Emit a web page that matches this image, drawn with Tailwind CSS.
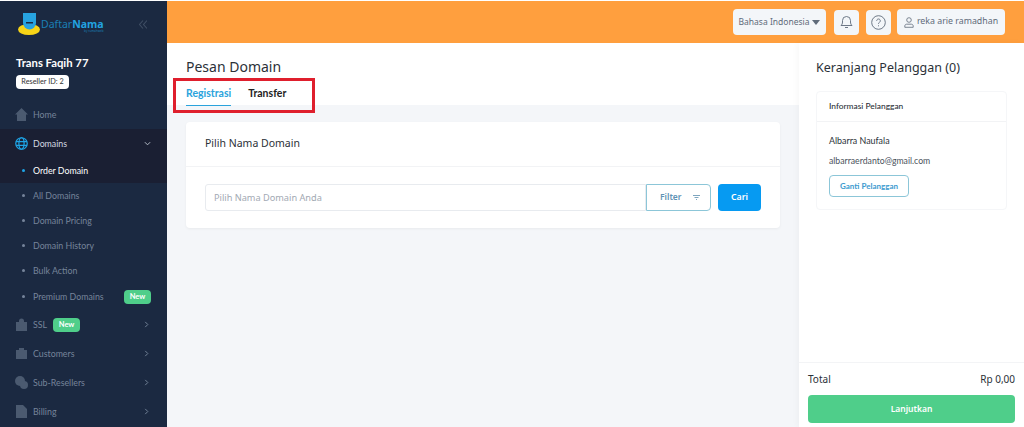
<!DOCTYPE html>
<html lang="id">
<head>
  <meta charset="UTF-8" />
  <title>Pesan Domain</title>
  <script src="https://cdn.jsdelivr.net/npm/@tailwindcss/browser@4"></script>
</head>
<body class="bg-white font-['Noto_Sans',sans-serif]">
  <div class="relative flex h-[427px] w-[1024px] overflow-hidden pt-px">
    <!-- Sidebar -->
    <aside class="flex h-full w-[167px] shrink-0 flex-col bg-[#1b2941] font-['Lato',sans-serif]">
      <div class="flex h-[47px] items-center pl-[18px] pr-[20px]">
        <svg class="mb-[2px] h-[22px] w-[22px]" viewBox="0 0 22 22">
          <ellipse cx="11" cy="16.500" rx="11" ry="5.500" fill="#f7d417" />
          <path d="M5 0h13v10a6.500 6.500 0 0 1-13 0z" fill="#27a3e0" />
          <rect x="8" y="9" width="7" height="1.500" fill="#1b2941" />
        </svg>
        <div class="relative ml-[1px] font-['Noto_Sans',sans-serif] text-[10.500px] leading-none text-[#1a7fb4]">Daftar<b class="font-bold text-[#22a3e0]">Nama</b>
          <span class="absolute right-0 top-[11px] text-[3px] text-[#1a7fb4]">by rumahweb</span>
        </div>
        <svg class="ml-auto h-[9px] w-[8px]" viewBox="0 0 8 9" fill="none" stroke="#3f4e64" stroke-width="1.100"><path d="M4 .5 .5 4.500 4 8.500M8 .5 4.500 4.500 8 8.500" /></svg>
      </div>
      <div class="pl-[16px] pt-[7px]">
        <div class="text-[11.300px] leading-[16px] font-bold text-white">Trans Faqih 77</div>
        <div class="mt-[4px] flex h-[14px] w-[53px] items-center justify-center rounded-[4px] bg-white text-[7.300px] text-[#333]">Reseller ID: 2</div>
      </div>
      <nav class="mt-[11px] flex flex-col text-[8.800px] text-[#76849a]">
        <a class="flex h-[29px] items-center pl-[15px]">
          <svg class="mr-[5px] h-[13px] w-[13px]" viewBox="0 0 13 13" fill="#4b5a70"><path d="M6.500 0 13 6.500h-2V13H2V6.500H0z" /></svg>Home
        </a>
        <div class="bg-[#1a1f33]">
          <a class="flex h-[29px] items-center pl-[15px] pr-[16px] text-[#d4d9e2]">
            <svg class="mr-[5px] h-[13px] w-[13px]" viewBox="0 0 14 14" fill="none" stroke="#1ea4e6" stroke-width="1.300"><circle cx="7" cy="7" r="6.200" /><ellipse cx="7" cy="7" rx="2.800" ry="6.200" /><path d="M1 5h12M1 9h12" /></svg>
            Domains
            <svg class="ml-auto h-[7px] w-[7px]" viewBox="0 0 8 8" fill="none" stroke="#b7bfcb" stroke-width="1.100"><path d="m1 2.500 3 3 3-3" /></svg>
          </a>
          <a class="flex h-[25px] items-center pl-[22px] text-white">
            <span class="mr-[8px] h-[3px] w-[3px] rounded-full bg-[#1ea4e6]"></span>Order Domain
          </a>
        </div>
        <a class="flex h-[25px] items-center pl-[22px]"><span class="mr-[8px] h-[3px] w-[3px] rounded-full bg-[#76849a]"></span>All Domains</a>
        <a class="flex h-[25px] items-center pl-[22px]"><span class="mr-[8px] h-[3px] w-[3px] rounded-full bg-[#76849a]"></span>Domain Pricing</a>
        <a class="flex h-[25px] items-center pl-[22px]"><span class="mr-[8px] h-[3px] w-[3px] rounded-full bg-[#76849a]"></span>Domain History</a>
        <a class="flex h-[25px] items-center pl-[22px]"><span class="mr-[8px] h-[3px] w-[3px] rounded-full bg-[#76849a]"></span>Bulk Action</a>
        <a class="flex h-[27px] items-center pl-[22px] pr-[16px]"><span class="mr-[8px] h-[3px] w-[3px] rounded-full bg-[#76849a]"></span>Premium Domains
          <span class="ml-auto flex h-[14px] w-[27px] items-center justify-center rounded-[4px] bg-[#4fce8a] text-[7.500px] font-bold text-white">New</span>
        </a>
        <a class="flex h-[29px] items-center pl-[16px] pr-[17px]">
          <svg class="mr-[6px] h-[13px] w-[11px]" viewBox="0 0 11 13" fill="#4b5a70"><path d="M3 4V3a2.500 2.500 0 0 1 5 0v1h3v9H0V4z" /></svg>SSL
          <span class="ml-[6px] flex h-[14px] w-[27px] items-center justify-center rounded-[4px] bg-[#4fce8a] text-[7.500px] font-bold text-white">New</span>
          <svg class="ml-auto h-[7px] w-[7px]" viewBox="0 0 8 8" fill="none" stroke="#76849a" stroke-width="1.100"><path d="m2.500 1 3 3-3 3" /></svg>
        </a>
        <a class="flex h-[29px] items-center pl-[16px] pr-[17px]">
          <svg class="mr-[6px] h-[11px] w-[11px]" viewBox="0 0 11 11" fill="#4b5a70"><path d="M3 0h5v2h3v9H0V2h3z" /></svg>Customers
          <svg class="ml-auto h-[7px] w-[7px]" viewBox="0 0 8 8" fill="none" stroke="#76849a" stroke-width="1.100"><path d="m2.500 1 3 3-3 3" /></svg>
        </a>
        <a class="flex h-[29px] items-center pl-[15px] pr-[17px]">
          <svg class="mr-[5px] h-[13px] w-[13px]" viewBox="0 0 13 13" fill="#4b5a70"><circle cx="5" cy="5" r="5" /><circle cx="9" cy="9" r="4" /></svg>Sub-Resellers
          <svg class="ml-auto h-[7px] w-[7px]" viewBox="0 0 8 8" fill="none" stroke="#76849a" stroke-width="1.100"><path d="m2.500 1 3 3-3 3" /></svg>
        </a>
        <a class="flex h-[29px] items-center pl-[16px] pr-[17px]">
          <svg class="mr-[6px] h-[13px] w-[11px]" viewBox="0 0 11 13" fill="#4b5a70"><path d="M0 0h7l4 4v9H0z" /></svg>Billing
          <svg class="ml-auto h-[7px] w-[7px]" viewBox="0 0 8 8" fill="none" stroke="#76849a" stroke-width="1.100"><path d="m2.500 1 3 3-3 3" /></svg>
        </a>
      </nav>
    </aside>

    <div class="flex min-w-0 flex-1 flex-col">
      <!-- Top bar -->
      <header class="flex h-[42px] shrink-0 items-center justify-end bg-[#ff9f3e] pr-[19px]">
        <div class="flex h-[26px] w-[93px] items-center justify-center gap-[3px] rounded-[4px] bg-[#f3f6f9] text-[8.500px] text-[#5f6b7a]">
          Bahasa Indonesia
          <svg class="h-[5px] w-[8px]" viewBox="0 0 8 5" fill="#5f6b7a"><path d="M0 0h8L4 5z" /></svg>
        </div>
        <div class="ml-[8px] flex h-[25px] w-[25px] items-center justify-center rounded-[4px] bg-[#f3f6f9]">
          <svg class="h-[14px] w-[13px]" viewBox="0 0 13 14" fill="none" stroke="#5f6b7a" stroke-width="0.900"><path d="M1 10.500h11c-1-1-1.500-2-1.500-3.500V5.500a4 4 0 0 0-8 0V7C2.500 8.500 2 9.500 1 10.500zM5 12.500h3" /></svg>
        </div>
        <div class="ml-[7px] flex h-[25px] w-[25px] items-center justify-center rounded-[4px] bg-[#f3f6f9]">
          <svg class="h-[15px] w-[15px]" viewBox="0 0 15 15" fill="none" stroke="#5f6b7a" stroke-width="0.900"><circle cx="7.500" cy="7.500" r="6.800" /><path d="M5.700 5.800a1.800 1.800 0 1 1 2.800 1.500c-.7.4-1 .8-1 1.500M7.500 10.300v1" /></svg>
        </div>
        <div class="ml-[6px] flex h-[26px] w-[108px] items-center justify-center gap-[3px] rounded-[4px] bg-[#f3f6f9] text-[8.800px] text-[#5f6b7a]">
          <svg class="h-[11px] w-[10px]" viewBox="0 0 10 11" fill="none" stroke="#5f6b7a" stroke-width="0.800"><circle cx="5" cy="3" r="2.300" /><path d="M.8 10.300V9c0-1 .8-1.800 1.800-1.800h4.800c1 0 1.800.8 1.800 1.800v1.300z" /></svg>
          reka arie ramadhan
        </div>
      </header>

      <div class="flex min-h-0 flex-1">
        <!-- Main -->
        <main class="flex min-w-0 flex-1 flex-col bg-[#f4f6f9]">
          <div class="h-[62px] shrink-0 bg-white pl-[19px] pt-[14px]">
            <h1 class="text-[14px] leading-[20px] font-normal text-[#2b3138]">Pesan Domain</h1>
            <div class="mt-[9px] flex gap-[17px] font-['Lato',sans-serif] text-[10.500px] leading-[14px] font-bold">
              <span class="border-b border-[#2aa3dc] pb-[5px] text-[#2aa3dc]">Registrasi</span>
              <span class="text-[#222]">Transfer</span>
            </div>
          </div>
          <section class="ml-[19px] mt-[17px] h-[106px] w-[594px] rounded-[4px] bg-white shadow-[0_1px_3px_rgba(0,0,0,0.05)]">
            <div class="flex h-[45px] items-center border-b border-[#f2f3f5] pl-[19px] text-[10.500px] text-[#2b3138]">Pilih Nama Domain</div>
            <div class="flex pl-[19px] pt-[17px]">
              <div class="flex h-[27px] w-[441px] items-center rounded-l-[3px] border border-[#e8ebef] pl-[8px] text-[9.200px] text-[#a2a9b3]">Pilih Nama Domain Anda</div>
              <div class="flex h-[27px] w-[65px] items-center rounded-r-[4px] border border-[#8cc6d8] pl-[13px] text-[8.500px] font-semibold text-[#5f93b5]">
                Filter
                <svg class="ml-[11px] h-[5px] w-[7px]" viewBox="0 0 7 5" fill="none" stroke="#7ea6bf"><path d="M0 .5h7M1.500 2.500h4M3 4.500h1" /></svg>
              </div>
              <div class="ml-[7px] flex h-[27px] w-[43px] items-center justify-center rounded-[4px] bg-[#069af2] text-[8.800px] font-semibold text-white">Cari</div>
            </div>
          </section>
        </main>

        <!-- Cart -->
        <aside class="flex w-[225px] shrink-0 flex-col bg-white shadow-[-2px_0_6px_rgba(0,0,0,0.03)]">
          <div class="px-[17px] pt-[16px]">
            <h2 class="text-[12.500px] leading-[17px] text-[#2b3138]">Keranjang Pelanggan (0)</h2>
            <div class="mt-[15px] h-[119px] w-[191px] rounded-[4px] border border-[#f5f6f8] font-['Lato',sans-serif]">
              <div class="flex h-[30px] items-center border-b border-[#f2f3f5] pl-[12px] text-[8.400px] font-medium text-[#2b3138]">Informasi Pelanggan</div>
              <div class="pl-[12px] pt-[13px]">
                <div class="text-[8.900px] leading-[12px] text-[#2b3138]">Albarra Naufala</div>
                <div class="mt-[8px] text-[8.700px] leading-[12px] text-[#4a525c]">albarraerdanto@gmail.com</div>
                <div class="mt-[8px] flex h-[22px] w-[80px] items-center justify-center rounded-[4px] border border-[#8cc6d8] text-[8px] font-bold text-[#3d9bd0]">Ganti Pelanggan</div>
              </div>
            </div>
          </div>
          <div class="mt-auto border-t border-[#f3f4f6] pl-[9px] pr-[9px] pb-[4px] pt-[9px]">
            <div class="flex justify-between text-[10px] leading-[15px] text-[#2b3138]"><span>Total</span><span>Rp 0,00</span></div>
            <div class="mt-[8px] flex h-[28px] items-center justify-center rounded-[4px] bg-[#4fce8a] text-[8.500px] font-semibold text-white">Lanjutkan</div>
          </div>
        </aside>
      </div>
    </div>

    <!-- Red annotation box -->
    <div class="absolute left-[173px] top-[78px] h-[35px] w-[142px] border-[3px] border-[#df1f2d]"></div>
  </div>
</body>
</html>
